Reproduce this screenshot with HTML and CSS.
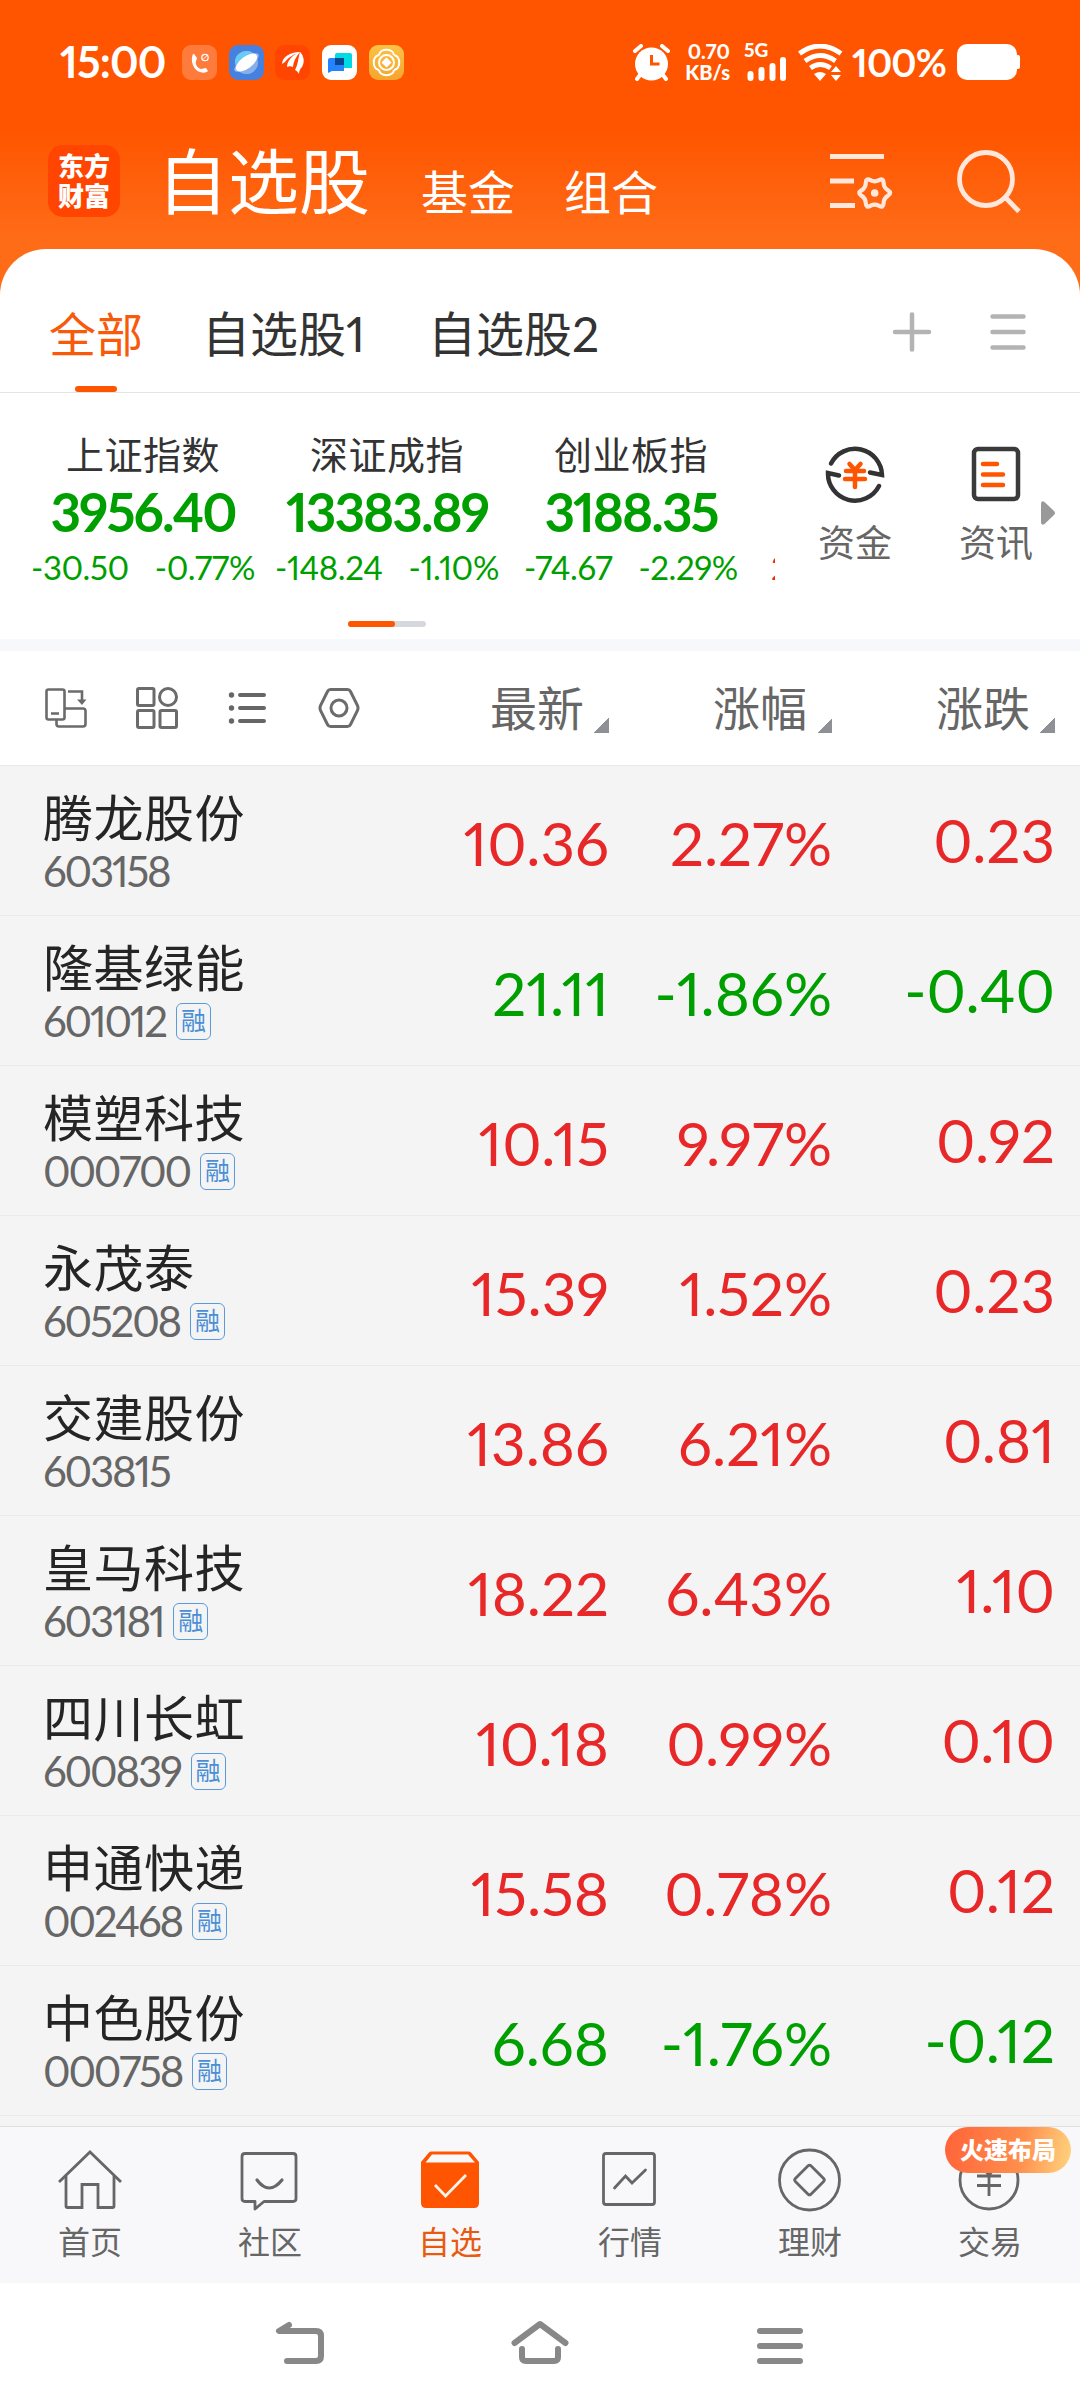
FILE: index.html
```html
<!DOCTYPE html>
<html lang="zh-CN">
<head>
  <meta charset="UTF-8"/>
  <meta name="viewport" content="width=device-width, initial-scale=1.0"/>
  <title>自选股</title>
  <link rel="stylesheet" href="styles.css">
</head>
<body>

  <header class="top">
    <div class="status-bar">
      <span class="time">15:00</span>
      <div class="app-icons">
        <svg class="app call" viewBox="0 0 35 35"><path d="M11 9c-3 6 0 16 7 18 3 1 6 1 8-1l-2-3-5 1c-4-1-6-5-5-8l1-3-3-4z" fill="#fff"/><circle cx="23" cy="12.500" r="3.200" fill="none" stroke="#fff" stroke-width="1.300"/><path d="M21 14.500l4-4" stroke="#fff"/></svg>
        <svg class="app planet" viewBox="0 0 35 35"><circle cx="17.500" cy="17.500" r="11.500" fill="#84b0ec"/><path d="M6 19a11.500 11.500 0 0 1 19-10z" fill="#69cbf5"/><ellipse cx="17.500" cy="17.500" rx="14.500" ry="5" transform="rotate(-35 17.500 17.500)" fill="#9abdf0"/><ellipse cx="17.500" cy="17.500" rx="12.500" ry="6" transform="rotate(-37 17.500 17.500)" fill="#fff"/></svg>
        <svg class="app fund" viewBox="0 0 35 35"><path d="M7 19c0-6 7-12 18-12-8 3-12 6-15 10zM12 22c0-6 5-12 13-15-4 5-7 10-7 15-2-1-4-1-6 0zM20 25c3-5 3-11 5-18 4 4 5 10 2 15-2 2-3 4-3 7-1-2-2-3-4-4z" fill="#fff"/></svg>
        <svg class="app chat" viewBox="0 0 35 35"><path d="M15 8h13q2 0 2 2v13H13V10q0-2 2-2z" fill="#00dbe3"/><path d="M8 13h14v13H10l-4 2V15q0-2 2-2z" fill="#2484ff"/><path d="M13 13h9v7h-9z" fill="#0a4592"/></svg>
        <svg class="app bank" viewBox="0 0 35 35"><g fill="none" stroke="#fff" stroke-width="2"><circle cx="17.500" cy="17.500" r="7.500"/><path d="M10 10c1-7 14-7 15 0M10 25c1 7 14 7 15 0M10 10c-7 1-7 14 0 15M25 10c7 1 7 14 0 15"/></g><path d="M17.500 12.500l5 5-5 5-5-5z" fill="#fff"/></svg>
      </div>
      <div class="status-right">
        <svg class="alarm" width="38" height="37" viewBox="0 0 38 37"><circle cx="18.500" cy="20" r="16.500" fill="#fff"/><path d="M2 7l6-5M29 2l6 5M7 31l-3 4M30 31l3 4" stroke="#fff" stroke-width="4" stroke-linecap="round"/><path d="M18.500 11v9h8" fill="none" stroke="#ff5500" stroke-width="3"/></svg>
        <div class="net-speed"><span>0.70</span><span>KB/s</span></div>
        <div class="signal">
          <span>5G</span>
          <svg width="42" height="26" viewBox="0 0 42 26"><path d="M6.500 19v4M17.500 15v8M28.500 11v12M39 5v18" stroke="#fff" stroke-width="6" stroke-linecap="round"/></svg>
        </div>
        <svg class="wifi" width="45" height="37" viewBox="0 0 45 37"><g fill="none" stroke="#fff" stroke-width="4.800"><path d="M1.500 9.500q20.500-15 41.500 0"/><path d="M7 17q15-11 30.500 0"/><path d="M12.500 24q9.500-7 20 0"/></g><path d="M16 30q6-4 12 0l-6 7z" fill="#fff"/><path d="M38 22l5 6H33zM38 37l5-6H33z" fill="#fff"/></svg>
        <span class="percent">100%</span>
        <div class="battery"></div>
      </div>
    </div>

    <div class="title-bar">
      <div class="logo"><span>东方</span><span>财富</span></div>
      <h1>自选股</h1>
      <a href="#" class="title-link">基金</a>
      <a href="#" class="title-link">组合</a>
      <div class="title-actions">
        <svg width="64" height="62" viewBox="0 0 64 62"><g fill="none" stroke="#ffe8db"><path d="M0 8.500h54M0 33h24M0 57.500h25" stroke-width="5"/><path d="M58 42.400Q62.200 45 58 47.600Q53.800 50.250 53.600 55.200Q53.450 60.160 49.100 57.800Q44.700 55.500 40.300 57.800Q35.950 60.160 35.800 55.200Q35.600 50.250 31.400 47.600Q27.200 45 31.400 42.400Q35.600 39.750 35.800 34.800Q35.950 29.840 40.300 32.200Q44.700 34.500 49.100 32.200Q53.450 29.840 53.600 34.800Q53.800 39.750 58 42.400z" stroke-width="4.200"/></g><circle cx="44.700" cy="45" r="3.800" fill="#ffe8db"/></svg>
        <svg width="64" height="66" viewBox="0 0 64 66"><g fill="none" stroke="#ffe8db" stroke-width="4.800"><circle cx="29" cy="31" r="26.500"/><path d="M48 49l14 14.500"/></g></svg>
      </div>
    </div>
  </header>

  <main class="sheet">
    <nav class="tabs">
      <a href="#" class="tab active">全部</a>
      <a href="#" class="tab">自选股1</a>
      <a href="#" class="tab">自选股2</a>
      <div class="tab-actions">
        <svg width="40" height="40" viewBox="0 0 40 40"><path d="M20 2.500v35M3 20h34" stroke="#b3b3b3" stroke-width="4.500" stroke-linecap="round"/></svg>
        <svg width="36" height="40" viewBox="0 0 36 40"><path d="M2.500 4.500h31M2.500 20h31M2.500 35.500h31" stroke="#b3b3b3" stroke-width="4.500" stroke-linecap="round"/></svg>
      </div>
    </nav>

    <section class="market">
      <div class="indexes">
        <div class="index">
          <h3>上证指数</h3>
          <strong>3956.40</strong>
          <p><span>-30.50</span><span>-0.77%</span></p>
        </div>
        <div class="index">
          <h3>深证成指</h3>
          <strong>13383.89</strong>
          <p><span>-148.24</span><span>-1.10%</span></p>
        </div>
        <div class="index">
          <h3>创业板指</h3>
          <strong>3188.35</strong>
          <p><span>-74.67</span><span>-2.29%</span></p>
        </div>
        <div class="index next"><p><span>2</span></p></div>
      </div>
      <div class="shortcuts">
        <a href="#" class="shortcut">
          <svg width="60" height="60" viewBox="0 0 60 60"><g fill="none" stroke="#333" stroke-width="4.500" stroke-linejoin="miter"><path d="M6 19.500A27 27 0 0 1 57 31l-12-2.500" stroke-linecap="round"/><path d="M54 42A27 27 0 0 1 3 29l11 2.500" stroke-linecap="round"/></g><path d="M24.500 20l5.500 6 5.500-6M21 27h18M20 35h20M30 26v17" fill="none" stroke="#ff5500" stroke-width="4.500" stroke-linecap="round"/></svg>
          <span>资金</span>
        </a>
        <a href="#" class="shortcut">
          <svg width="60" height="60" viewBox="0 0 60 60"><rect x="8" y="5" width="44" height="50" rx="4" fill="none" stroke="#3a3a3a" stroke-width="4.500"/><path d="M17 20h14M17 30.500h20M17 41h20" stroke="#ff5500" stroke-width="4.500" stroke-linecap="round"/></svg>
          <span>资讯</span>
        </a>
        <svg class="more" width="16" height="26" viewBox="0 0 16 26"><path d="M1 4q0-4 3.500-2L14 11q2 2 0 4L4.500 24Q1 26 1 22z" fill="#999"/></svg>
      </div>
      <div class="pager"><span></span></div>
    </section>

    <section class="list-head">
      <div class="tools">
        <svg width="42" height="42" viewBox="0 0 42 42"><g fill="none" stroke="#6b6b6b" stroke-width="2.600"><rect x="1.500" y="2.500" width="18" height="30" rx="2"/><path d="M20 21.500h18q2.500 0 2.500 2.500v13q0 2.500-2.500 2.500H14q-2.500 0-2.500-2.500v-5M6 26.500h8M23 4.500h14V14"/></g><path d="M32 12.500h9.500L37 18z" fill="#6b6b6b"/></svg>
        <svg width="42" height="42" viewBox="0 0 42 42"><g fill="none" stroke="#6b6b6b" stroke-width="3"><rect x="1.500" y="1.500" width="16.500" height="17" rx="1.500"/><circle cx="32" cy="10" r="8.500"/><rect x="1.500" y="23.500" width="16.500" height="17" rx="1.500"/><rect x="24" y="23.500" width="16.500" height="17" rx="1.500"/></g></svg>
        <svg width="42" height="42" viewBox="0 0 42 42"><path d="M13 8h24M13 21h24M13 34h24" stroke="#666" stroke-width="4" stroke-linecap="round"/><g fill="#666"><circle cx="4.500" cy="8" r="2.700"/><circle cx="4.500" cy="21" r="2.700"/><circle cx="4.500" cy="34" r="2.700"/></g></svg>
        <svg width="42" height="42" viewBox="0 0 42 42"><g fill="none" stroke="#6b6b6b" stroke-width="3"><path d="M12.500 2.500h17q2 0 3 2l7 14q1 2.500 0 5l-7 14q-1 2-3 2h-17q-2 0-3-2l-7-14q-1-2.500 0-5l7-14q1-2 3-2z"/><circle cx="21" cy="21" r="8"/></g></svg>
      </div>
      <div class="sort">最新</div>
      <div class="sort">涨幅</div>
      <div class="sort">涨跌</div>
    </section>

    <section class="stocks">
      <div class="row up">
        <div class="stock"><h2>腾龙股份</h2><p>603158</p></div>
        <span class="num">10.36</span><span class="num">2.27%</span><span class="num diff">0.23</span>
      </div>
      <div class="row down">
        <div class="stock"><h2>隆基绿能</h2><p>601012<i>融</i></p></div>
        <span class="num">21.11</span><span class="num">-1.86%</span><span class="num diff">-0.40</span>
      </div>
      <div class="row up">
        <div class="stock"><h2>模塑科技</h2><p>000700<i>融</i></p></div>
        <span class="num">10.15</span><span class="num">9.97%</span><span class="num diff">0.92</span>
      </div>
      <div class="row up">
        <div class="stock"><h2>永茂泰</h2><p>605208<i>融</i></p></div>
        <span class="num">15.39</span><span class="num">1.52%</span><span class="num diff">0.23</span>
      </div>
      <div class="row up">
        <div class="stock"><h2>交建股份</h2><p>603815</p></div>
        <span class="num">13.86</span><span class="num">6.21%</span><span class="num diff">0.81</span>
      </div>
      <div class="row up">
        <div class="stock"><h2>皇马科技</h2><p>603181<i>融</i></p></div>
        <span class="num">18.22</span><span class="num">6.43%</span><span class="num diff">1.10</span>
      </div>
      <div class="row up">
        <div class="stock"><h2>四川长虹</h2><p>600839<i>融</i></p></div>
        <span class="num">10.18</span><span class="num">0.99%</span><span class="num diff">0.10</span>
      </div>
      <div class="row up">
        <div class="stock"><h2>申通快递</h2><p>002468<i>融</i></p></div>
        <span class="num">15.58</span><span class="num">0.78%</span><span class="num diff">0.12</span>
      </div>
      <div class="row down">
        <div class="stock"><h2>中色股份</h2><p>000758<i>融</i></p></div>
        <span class="num">6.68</span><span class="num">-1.76%</span><span class="num diff">-0.12</span>
      </div>
    </section>
  </main>

  <nav class="bottom-nav">
    <a href="#" class="nav-item">
      <svg viewBox="0 0 66 66"><g fill="none" stroke="#666" stroke-width="2.800"><path d="M2 34L33 4l31 30"/><path d="M9 28v30q0 1.500 1.500 1.500H25V36.500h16v23h14.500q1.500 0 1.500-1.500V28"/></g></svg>
      <span>首页</span>
    </a>
    <a href="#" class="nav-item">
      <svg viewBox="0 0 66 66"><path d="M8 5.500h48q3 0 3 3v42q0 3-3 3H27l-9 7.500v-7.500H8q-3 0-3-3v-42q0-3 3-3z" fill="none" stroke="#666" stroke-width="2.800" stroke-linejoin="round"/><path d="M20 32q12 16 25 0" fill="none" stroke="#666" stroke-width="3.200" stroke-linecap="round"/></svg>
      <span>社区</span>
    </a>
    <a href="#" class="nav-item active">
      <svg viewBox="0 0 66 66"><path d="M14 3.500h38q1.500 0 2.500 1.500L62 14v41q0 5-5 5H9q-5 0-5-5V14l7.500-9q1-1.500 2.500-1.500z" fill="#ff5500"/><path d="M15 6.500h36l7 8H8.500z" fill="#f8f8fb"/><path d="M18 37l10.500 11L49 27" fill="none" stroke="#fff3ec" stroke-width="2.800"/></svg>
      <span>自选</span>
    </a>
    <a href="#" class="nav-item">
      <svg viewBox="0 0 66 66"><rect x="6.500" y="5.500" width="51" height="51" rx="2.500" fill="none" stroke="#666" stroke-width="2.800"/><path d="M17.500 40l11-12 6.500 7 13.500-13" fill="none" stroke="#666" stroke-width="2.800" stroke-linecap="round"/></svg>
      <span>行情</span>
    </a>
    <a href="#" class="nav-item">
      <svg viewBox="0 0 66 66"><g fill="none" stroke="#666" stroke-width="2.800"><circle cx="32.500" cy="32" r="30"/><rect x="21.500" y="21" width="22" height="22" rx="2" transform="rotate(45 32.500 32)"/></g></svg>
      <span>理财</span>
    </a>
    <a href="#" class="nav-item">
      <svg viewBox="0 0 66 66"><g fill="none" stroke="#666" stroke-width="2.800"><circle cx="32" cy="32" r="29"/><path d="M22 15l10 12 10-12M20 28h24M20 37.500h24M32 27v21"/></g></svg>
      <span>交易</span>
      <b class="promo">火速布局</b>
    </a>
  </nav>

  <footer class="system-nav">
    <svg viewBox="0 0 60 50"><path d="M19 7L9 13h37q5 0 5 5v20q0 5-5 5H17" fill="none" stroke="#888" stroke-width="6" stroke-linecap="round" stroke-linejoin="round"/></svg>
    <svg viewBox="0 0 60 50"><path d="M4.500 25L30 6l25.500 19M12 31v8q0 4 4 4h28q4 0 4-4v-8" fill="none" stroke="#888" stroke-width="6" stroke-linecap="round" stroke-linejoin="round"/></svg>
    <svg viewBox="0 0 60 50"><path d="M10 13h40M10 28h40M10 43h40" stroke="#888" stroke-width="6" stroke-linecap="round"/></svg>
  </footer>

</body>
</html>
```
FILE: styles.css
```css
* { box-sizing: border-box; margin: 0; padding: 0; }
body {
  width: 1080px;
  height: 2408px;
  overflow: hidden;
  background: #fff;
  color: #333;
  font-family: Lato, "Noto Sans CJK SC", sans-serif;
  font-variant-numeric: proportional-nums;
}
a { color: inherit; text-decoration: none; }
svg { display: block; flex: none; }

/* Header */
.top { height: 295px; background: linear-gradient(#ff5500 0, #ff5500 130px, #ff6c18 240px, #ff6c18 100%); color: #fff; }
.status-bar { display: flex; align-items: center; height: 124px; padding: 0 63px 0 60px; }
.time { width: 122px; font-size: 43px; font-weight: 700; letter-spacing: -0.8px; line-height: 50px; }
.app-icons { display: flex; gap: 11.7px; }
.app { width: 35px; height: 35px; border-radius: 9px; }
.call { background: #ff7b3b; }
.planet { background: #4781e0; }
.fund { background: #ff4500; }
.chat { background: #fff; }
.bank { background: linear-gradient(#fdc243, #f5a52f); }
.status-right { display: flex; align-items: center; margin-left: auto; }
.net-speed { display: flex; flex-direction: column; width: 46px; margin-left: 13px; font-size: 20px; font-weight: 900; line-height: 21px; text-align: right; white-space: nowrap; }
.signal { width: 44px; margin-left: 14px; font-size: 19px; font-weight: 900; line-height: 14px; }
.signal svg { margin-top: -2px; }
.wifi { margin-left: 10px; }
.percent { width: 97px; margin-left: 9px; font-size: 38px; font-weight: 700; letter-spacing: -0.8px; line-height: 40px; white-space: nowrap; }
.battery { position: relative; width: 60px; height: 36px; margin-left: 8px; border-radius: 10px; background: #fff; }
.battery::after { content: ""; position: absolute; right: -3px; top: 11px; width: 5px; height: 14px; border-radius: 2px; background: #fff; }
.title-bar { display: flex; align-items: center; height: 114px; padding: 0 59px 0 48px; }
.logo { display: flex; flex-direction: column; align-items: center; justify-content: center; width: 72px; height: 72px; border-radius: 15px; background: #ff4500; font-size: 26px; font-weight: 900; line-height: 30px; }
h1 { margin-left: 37px; font-size: 71px; font-weight: 400; line-height: 80px; }
.title-link { margin-left: 49px; margin-top: 22px; font-size: 47px; line-height: 52px; }
h1 + .title-link { margin-left: 51px; }
.title-actions { display: flex; gap: 63px; margin-left: auto; }

/* Tabs */
.sheet { margin-top: -46px; border-radius: 46px 46px 0 0; background: #fff; }
.tabs { display: flex; height: 144px; padding: 52px 54px 0 49px; border-bottom: 1px solid #e4e4e4; font-size: 48px; }
.tab { position: relative; height: 91px; margin-right: 63px; line-height: 66px; }
.tab.active { margin-right: 59px; font-size: 47px; color: #f75a0b; }
.tab.active::after { content: ""; position: absolute; left: 50%; bottom: 0; width: 42px; height: 6px; margin-left: -21px; border-radius: 3px; background: #ff5500; }
.tab-actions { display: flex; gap: 58px; margin-top: 11px; margin-left: auto; }

/* Indexes */
.market { display: grid; grid-template-columns: 775px 1fr; grid-template-rows: 228px 18px; height: 246px; }
.indexes { display: flex; padding-left: 21px; overflow: hidden; }
.index { flex: none; width: 244px; padding-top: 37px; text-align: center; color: #009f00; white-space: nowrap; }
.index h3 { font-size: 38px; font-weight: 400; line-height: 48px; color: #333; letter-spacing: 0.5px; }
.index strong { display: block; font-size: 53px; line-height: 68px; letter-spacing: -2px; }
.index p { display: flex; justify-content: center; gap: 26px; font-size: 33px; line-height: 43px; letter-spacing: -0.4px; }
.index.next { padding-top: 153px; color: #e82828; }
.index.next p { justify-content: flex-start; padding-left: 18px; }
.shortcuts { position: relative; display: flex; gap: 65px; padding: 51px 0 0 42px; }
.shortcut { display: flex; flex-direction: column; align-items: center; width: 76px; font-size: 37px; line-height: 48px; color: #666; }
.shortcut span { margin-top: 15px; white-space: nowrap; }
.more { position: absolute; right: 24px; top: 107px; }
.pager { width: 78px; height: 6px; margin: 0 0 0 348px; border-radius: 3px; background: #d5d8dd; }
.pager span { display: block; width: 47px; height: 6px; border-radius: 3px; background: #ff5500; }

/* List header */
.list-head { display: grid; grid-template-columns: 386px 223px 223px 223px; align-items: center; height: 127px; border-top: 12px solid #f6f8fb; border-bottom: 1px solid #e9e9e9; }
.tools { display: flex; gap: 49px; padding-left: 45px; }
.sort { display: flex; justify-content: flex-end; align-items: flex-end; font-size: 47px; line-height: 64px; color: #666; }
.sort::after { content: ""; width: 15px; height: 15px; margin: 0 0 7px 10px; background: linear-gradient(135deg, transparent 50%, #8f8f96 50%); }

/* Stocks */
.stocks { height: 1360px; background: #f4f4f4; }
.row { display: grid; grid-template-columns: 386px 223px 223px 223px; height: 150px; border-bottom: 1px solid #eaeaea; }
.stock { padding: 22px 0 0 43px; }
.stock h2 { font-size: 50px; font-weight: 400; line-height: 60px; letter-spacing: 0.5px; color: #252525; }
.stock p { display: flex; align-items: center; font-size: 42px; line-height: 46px; letter-spacing: -2.2px; color: #666; }
.stock i { width: 35px; height: 37px; margin-left: 10px; border: 1.5px solid #5b9bdc; border-radius: 6px; font-size: 25px; font-style: normal; line-height: 33px; letter-spacing: 0; text-align: center; color: #4a8ed6; }
.num { font-size: 60px; line-height: 154px; text-align: right; white-space: nowrap; }
.diff { line-height: 148px; }
.up .num { color: #e82828; }
.down .num { color: #009f00; }

/* Bottom navigation */
.bottom-nav { display: flex; height: 157px; border-top: 1px solid #e0e0e0; background: #f8f8fb; color: #666; }
.nav-item { position: relative; display: flex; flex-direction: column; align-items: center; width: 180px; padding-top: 21px; font-size: 32px; line-height: 40px; }
.nav-item svg { width: 66px; height: 66px; }
.nav-item span { margin-top: 8px; }
.nav-item.active { color: #e85a10; }
.promo { position: absolute; left: 45px; top: 0; width: 126px; height: 46px; border-radius: 23px; background: linear-gradient(100deg, #ff6338, #ff8e4c 60%, #ffd580); font-size: 24px; font-weight: 900; line-height: 46px; text-align: center; color: #fff; }
.system-nav { display: flex; justify-content: center; gap: 180px; height: 126px; padding-top: 35px; }
.system-nav svg { width: 60px; height: 50px; }
```
